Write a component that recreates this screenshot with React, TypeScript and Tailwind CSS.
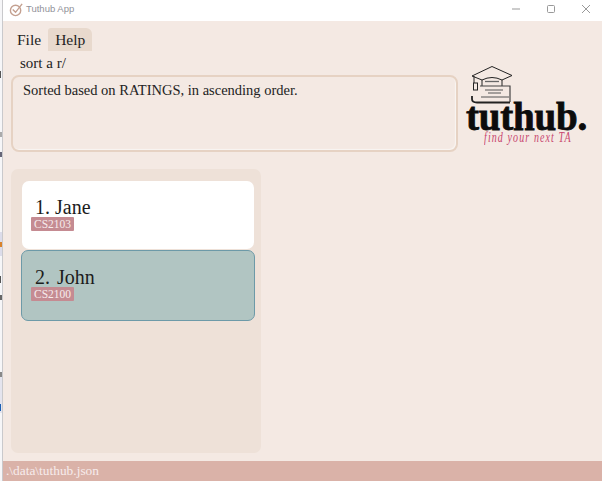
const serif = "font-['Liberation_Serif',serif]";

function Logo() {
  return (
    <div className="relative h-[80px] w-[122px]">
      <svg className="absolute left-[5px] top-0 h-[38px] w-[42px]" viewBox="0 0 42 38" fill="none" stroke="#222" strokeWidth="1">
        <path d="M1 10 L21 0.5 L41 9.5 L31 14 Q21 9 11 14 Z" strokeLinejoin="round" />
        <path d="M11 14 V20 M31 14 V20" />
        <path d="M14 15.5 H28" stroke="#666" strokeWidth="1.3" />
        <path d="M3 10 V17" />
        <rect x="2.5" y="17" width="4" height="7" fill="#f4e9e3" />
        <path d="M9 20 H39 V36" stroke="#444" strokeWidth="1.2" />
        <path d="M14 24 H32 M17 27 H30 M10 31 H38" stroke="#555" />
        <path d="M1 30 V33 Q1 36.5 6 36.5 H39" strokeWidth="1.8" />
      </svg>
      <span className="absolute left-0 top-[31px] font-['Liberation_Serif',serif] text-[39px] font-bold leading-[39px] tracking-[-0.2px] text-[#0c0c0c] [-webkit-text-stroke:0.8px_#0c0c0c]">tuthub.</span>
      <span className="absolute left-[18px] top-[62px] origin-top scale-y-150 font-['Liberation_Serif',serif] text-[10px] font-light italic leading-[11px] tracking-[1.1px] text-[#c8466e]">find your next TA</span>
    </div>
  );
}

function Card({ n, name, tag, selected, numClass }: { n: number; name: string; tag: string; selected?: boolean; numClass: string }) {
  return (
    <div className={selected
      ? "-mx-px flex h-[71px] flex-col rounded-[7px] border border-[#6d9aa8] bg-[#b1c5c2] pl-[9px] pt-[14px]"
      : "flex h-[68px] flex-col rounded-[7px] bg-white pl-[9px] pt-[14px]"}>
      <div className="flex pl-[4px] text-[20px] leading-[24px] text-[#1c1c1c]">
        <span className={numClass}>{n}.</span>
        <span>{name}</span>
      </div>
      <div className="-mt-[2px] w-fit rounded-[1px] bg-[#c58b92] px-[3px] text-[11.5px] leading-[14px] text-[#f7ecec]">{tag}</div>
    </div>
  );
}

function EdgeStrip() {
  return (
    <div className="flex w-[3px] shrink-0 flex-col border-r border-[#c9c9cc] bg-[#f6f6f8]">
      <div className="h-[71px] shrink-0" />
      <div className="h-[7px] w-[1px] shrink-0 bg-[#555]" />
      <div className="h-[54px] shrink-0" />
      <div className="h-[5px] w-[2px] shrink-0 bg-[#aaa]" />
      <div className="h-[15px] shrink-0" />
      <div className="h-[5px] w-[2px] shrink-0 bg-[#667]" />
      <div className="h-[75px] shrink-0" />
      <div className="flex h-[24px] shrink-0 items-center bg-[#dcdcea]">
        <div className="h-[5px] w-[2px] bg-[#d9822b]" />
      </div>
      <div className="h-[20px] shrink-0" />
      <div className="h-[7px] w-[1px] shrink-0 bg-[#555]" />
      <div className="h-[12px] shrink-0" />
      <div className="h-[5px] w-[2px] shrink-0 bg-[#666]" />
      <div className="h-[72px] shrink-0" />
      <div className="h-[5px] w-[2px] shrink-0 bg-[#888]" />
      <div className="h-[24px] shrink-0 bg-[#e4e4ee]" />
      <div className="flex h-[12px] shrink-0 items-center bg-[#e4e4ee]">
        <div className="h-[7px] w-[1px] bg-[#1a5fb4]" />
      </div>
    </div>
  );
}

export default function App() {
  return (
    <div className={`flex h-[481px] w-[602px] overflow-hidden bg-white ${serif}`}>
      <EdgeStrip />
      <div className="flex min-w-0 flex-1 flex-col">
        <div className="flex h-[21px] shrink-0 items-center bg-white pb-[3px] pl-[6px] font-['Liberation_Sans',sans-serif] text-[9.5px] text-[#92929a]">
          <svg className="h-[15px] w-[15px]" viewBox="0 0 16 16" fill="none" stroke="#c4a090" strokeWidth="1.5">
            <circle cx="7" cy="9" r="5.5" />
            <path d="M4 8 L7 11 L14 2" />
          </svg>
          <span className="ml-[2px]">Tuthub App</span>
          <div className="ml-auto flex items-center gap-[25px] pr-[11px]">
            <svg className="h-[10px] w-[10px]" viewBox="0 0 10 10" stroke="#999"><path d="M1 5 H9" /></svg>
            <svg className="h-[10px] w-[10px]" viewBox="0 0 10 10" fill="none" stroke="#999"><rect x="1.5" y="1.5" width="7" height="7" rx="1" /></svg>
            <svg className="h-[10px] w-[10px]" viewBox="0 0 10 10" stroke="#999"><path d="M1 1 L9 9 M9 1 L1 9" /></svg>
          </div>
        </div>
        <div className="flex min-h-0 flex-1 flex-col bg-[#f4e9e3]">
          <div className="flex h-[31px] shrink-0 items-end pb-px pl-[7px] text-[15.5px] leading-[23px] text-[#222]">
            <span className="px-[7px]">File</span>
            <span className="rounded-tl-[3px] rounded-tr-[6px] bg-[#e8d9cd] px-[7px]">Help</span>
          </div>
          <div className="flex shrink-0 pl-[8px] pr-[11px]">
            <div className="w-[447px] shrink-0">
              <div className="h-[23px] pl-[9px] text-[15px] leading-[23px] text-[#222]">sort a r/</div>
              <div className="h-[77px] rounded-[8px] border-2 border-[#e6d2c3] bg-[#f4e9e3] pl-[10px] pt-[3px] text-[14.5px] leading-[20px] text-[#222] shadow-[inset_-1px_-1px_1px_#f9f5f2]">
                Sorted based on RATINGS, in ascending order.
              </div>
            </div>
            <div className="ml-[8px] mt-[14px]"><Logo /></div>
          </div>
          <div className="ml-[8px] mt-[17px] flex w-[250px] flex-1 flex-col gap-px rounded-[7px] bg-[#eee1d8] pl-[11px] pr-[7px] pt-[12px]">
            <Card n={1} name="Jane" tag="CS2103" numClass="w-[20px]" />
            <Card n={2} name="John" tag="CS2100" selected numClass="w-[22px]" />
          </div>
          <div className="mt-[8px] h-[20px] shrink-0 bg-[#dab2a8] pl-[3px] text-[13.4px] leading-[20px] text-[#f7ecec]">.\data\tuthub.json</div>
        </div>
      </div>
    </div>
  );
}
